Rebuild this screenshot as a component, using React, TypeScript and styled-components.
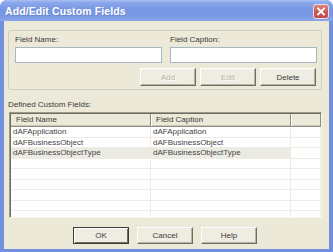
import React from "react";
import styled, { createGlobalStyle } from "styled-components";

const Global = createGlobalStyle`
  html, body { margin: 0; padding: 0; background: #ffffff; }
  body { font-family: "Liberation Sans", Arial, sans-serif; font-size: 8px; color: #000; }
  * { box-sizing: border-box; }
`;

const Window = styled.div`
  width: 333px;
  height: 252px;
  display: flex;
  flex-direction: column;
  background: #7390de;
  border-radius: 7px 7px 0 0;
  overflow: hidden;
`;

const TitleBar = styled.div`
  height: 21px;
  flex: none;
  display: flex;
  align-items: center;
  justify-content: space-between;
  padding: 0 4px 0 5px;
  background: linear-gradient(180deg, #a9c0f2 0%, #8ba8ec 12%, #7896e3 45%, #7a98e4 75%, #8ba6ea 100%);
`;

const Title = styled.span`
  font-family: "Liberation Sans", Arial, sans-serif;
  font-weight: bold;
  font-size: 10.5px;
  letter-spacing: 0.1px;
  color: #ffffff;
  text-shadow: 1px 1px 0 #6a86cf;
`;

const CloseButton = styled.div`
  width: 16px;
  height: 15px;
  margin-top: 1px;
  border: 1px solid #f0dcdc;
  border-radius: 3px;
  background: linear-gradient(180deg, #d9867f 0%, #c95a55 50%, #bd4c4c 100%);
  display: flex;
  align-items: center;
  justify-content: center;
`;

const Client = styled.div`
  flex: 1;
  margin: 0 4px 3px 4px;
  background: #ece9d8;
  padding: 9px 7px 5px 4px;
  display: flex;
  flex-direction: column;
`;

const GroupBox = styled.div`
  height: 60px;
  border: 1px solid #d0cebf;
  border-radius: 3px;
  padding: 4px 5px 0 6px;
  display: flex;
  flex-direction: column;
`;

const FieldGrid = styled.div`
  display: grid;
  grid-template-columns: 147px 147px;
  column-gap: 8px;
`;

const Field = styled.div`
  display: flex;
  flex-direction: column;
`;

const Label = styled.div<{ $gap?: number }>`
  height: 9px;
  line-height: 9px;
  font-size: 8px;
  color: #3a3a3a;
  margin-bottom: ${(p) => p.$gap ?? 3}px;
  white-space: nowrap;
`;

const TextInput = styled.div`
  height: 16px;
  background: #ffffff;
  border: 1px solid #a9b6c4;
`;

const ButtonRow = styled.div<{ $justify: string; $gap: number }>`
  display: flex;
  justify-content: ${(p) => p.$justify};
  gap: ${(p) => p.$gap}px;
`;

const Button = styled.div<{ $disabled?: boolean; $default?: boolean; $h: number }>`
  width: 56px;
  height: ${(p) => p.$h}px;
  display: flex;
  align-items: center;
  justify-content: center;
  font-size: 8px;
  color: ${(p) => (p.$disabled ? "#b3b0a2" : "#3a3a3a")};
  text-shadow: ${(p) => (p.$disabled ? "1px 1px 0 #ffffff" : "none")};
  background: #efede2;
  border-style: solid;
  border-width: 1px;
  border-color: ${(p) =>
    p.$default ? "#3c3b36" : "#ffffff #6f6d62 #6f6d62 #ffffff"};
  box-shadow: ${(p) =>
    p.$default
      ? "inset 1px 1px 0 #ffffff, inset -1px -1px 0 #6f6d62"
      : "inset -1px -1px 0 #b7b4a6"};
`;

const List = styled.div`
  margin-left: 1px;
  height: 106px;
  display: flex;
  flex-direction: column;
  overflow: hidden;
  background: #ffffff;
  border-style: solid;
  border-width: 1px;
  border-color: #9d9a8d #f7f6ef #f7f6ef #9d9a8d;
  box-shadow: inset 1px 1px 0 #6f6d62;
  padding: 1px 0 0 1px;
`;

const Cols = "140px 140px 1fr";

const HeaderRow = styled.div`
  display: grid;
  grid-template-columns: ${Cols};
  height: 13px;
  flex: none;
  background: #ece9d8;
  border-bottom: 1px solid #8f8c80;
  box-shadow: inset 0 -1px 0 #cbc7b8;
`;

const HeaderCell = styled.div`
  padding-left: 5px;
  line-height: 12px;
  font-size: 8px;
  color: #3a3a3a;
  border-right: 1px solid #8f8c80;
  box-shadow: 1px 0 0 #ffffff;
  white-space: nowrap;
  overflow: hidden;
`;

const Row = styled.div`
  display: grid;
  grid-template-columns: ${Cols};
  height: 10.5px;
  flex: none;
`;

const Cell = styled.div<{ $selected?: boolean }>`
  padding-left: 2px;
  line-height: 10px;
  font-size: 8px;
  color: #444;
  white-space: nowrap;
  overflow: hidden;
  background: ${(p) => (p.$selected ? "#ecebe3" : "#ffffff")};
  border-right: 1px solid #eeece3;
  border-bottom: 1px solid #eeece3;
`;

const Footer = styled.div`
  margin-top: 9px;
`;

const rows: [string, string][] = [
  ["dAFApplication", "dAFApplication"],
  ["dAFBusinessObject", "dAFBusinessObject"],
  ["dAFBusinessObjectType", "dAFBusinessObjectType"],
  ["", ""],
  ["", ""],
  ["", ""],
  ["", ""],
  ["", ""],
  ["", ""],
];

export default function App() {
  return (
    <>
      <Global />
      <Window>
        <TitleBar>
          <Title>Add/Edit Custom Fields</Title>
          <CloseButton>
            <svg width="10" height="9" viewBox="0 0 10 9">
              <path d="M2 1.5 L8 7.5 M8 1.5 L2 7.5" stroke="#ffffff" strokeWidth="1.8" strokeLinecap="square" />
            </svg>
          </CloseButton>
        </TitleBar>
        <Client>
          <GroupBox>
            <FieldGrid>
              <Field>
                <Label>Field Name:</Label>
                <TextInput />
              </Field>
              <Field>
                <Label>Field Caption:</Label>
                <TextInput />
              </Field>
            </FieldGrid>
            <ButtonRow $justify="flex-end" $gap={4} style={{ marginTop: 5 }}>
              <Button $h={18} $disabled>Add</Button>
              <Button $h={18} $disabled>Edit</Button>
              <Button $h={18}>Delete</Button>
            </ButtonRow>
          </GroupBox>
          <Label $gap={3} style={{ marginTop: 10 }}>
            Defined Custom Fields:
          </Label>
          <List>
            <HeaderRow>
              <HeaderCell>Field Name</HeaderCell>
              <HeaderCell>Field Caption</HeaderCell>
              <HeaderCell />
            </HeaderRow>
            {rows.map(([a, b], i) => (
              <Row key={i}>
                <Cell $selected={i === 2}>{a}</Cell>
                <Cell $selected={i === 2}>{b}</Cell>
                <Cell />
              </Row>
            ))}
          </List>
          <Footer>
            <ButtonRow $justify="center" $gap={8}>
              <Button $h={17} $default>OK</Button>
              <Button $h={17}>Cancel</Button>
              <Button $h={17}>Help</Button>
            </ButtonRow>
          </Footer>
        </Client>
      </Window>
    </>
  );
}
